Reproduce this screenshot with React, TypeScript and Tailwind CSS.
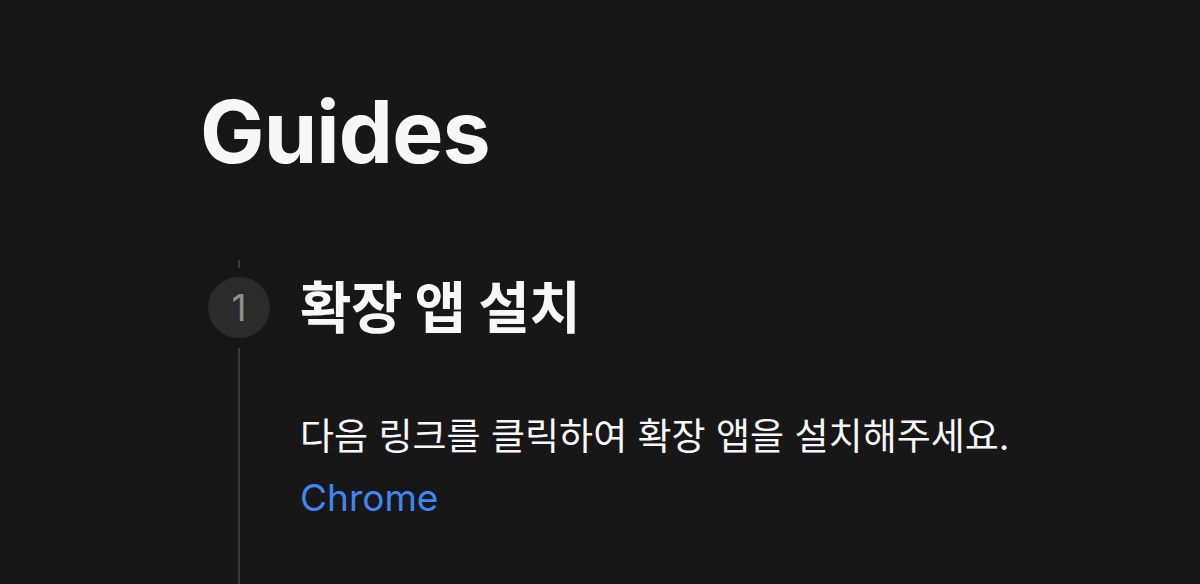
import React from "react";

export default function App() {
  const font = { fontFamily: 'Inter, "Noto Sans CJK KR", sans-serif' };
  return (
    <div
      className="h-screen w-full overflow-hidden bg-[#171717] text-[#f7f7f7] flex flex-col pl-[200px] pt-[89px]"
      style={font}
    >
      <h1 className="text-[86px] leading-none font-bold tracking-[-0.01em]">Guides</h1>
      <div className="flex flex-1 mt-[85px]">
        <div className="ml-[8px] w-[62px] flex flex-col items-center">
          <div className="w-[2px] h-[8px] bg-[#3a3a3a]" />
          <div className="mt-[9px] w-[62px] h-[61px] rounded-full bg-[#2b2b2b] flex items-center justify-center text-[37px] text-[#8e8e8e] leading-none">
            1
          </div>
          <div className="mt-[10px] w-[2px] flex-1 bg-[#3a3a3a]" />
        </div>
        <div className="ml-[30px] flex flex-col">
          <div className="mt-[17px] h-[61px] flex items-center">
            <h2 className="text-[56px] font-bold leading-none tracking-[-0.01em]">확장 앱 설치</h2>
          </div>
          <div className="mt-[68px] text-[37px] leading-[61px]">
            <p>다음 링크를 클릭하여 확장 앱을 설치해주세요.</p>
            <a className="text-[#3f86f1]">Chrome</a>
          </div>
        </div>
      </div>
    </div>
  );
}
